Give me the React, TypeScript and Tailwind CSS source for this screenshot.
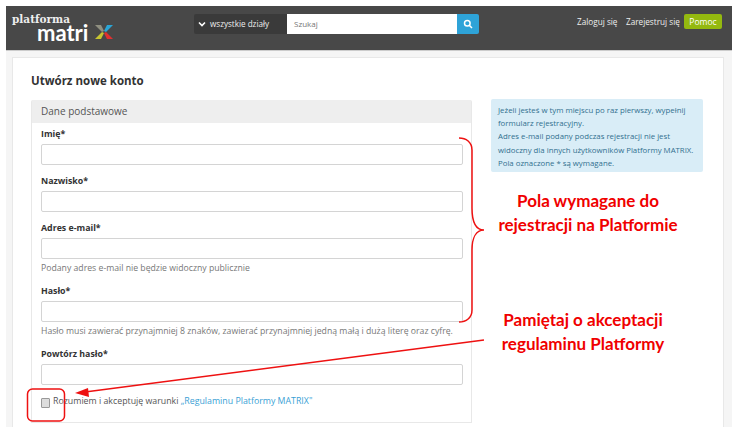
const font = { fontFamily: '"Open Sans", sans-serif' };

const Field = ({ label, hint }: { label: string; hint?: string }) => (
  <div className="mb-[9px]">
    <label className="block h-[15px] text-[8.8px] leading-[15px] font-bold text-[#333]">{label}</label>
    <div className="mt-[2px] h-[21px] rounded-[2px] border border-[#d4d4d4] bg-white" />
    {hint && <p className="mt-[3px] h-[13px] whitespace-nowrap text-[8.7px] leading-[13px] text-[#777]">{hint}</p>}
  </div>
);

const Annotations = () => (
  <>
    <svg className="absolute left-0 top-0 pointer-events-none" width="738" height="448" fill="none">
      {/* klamra */}
      <path
        d="M459 138 C466 138 472 142 472 150 L472 208 C472 222 476 230 484 230 C476 230 472 238 472 250 L472 310 C472 318 466 322 459 322"
        stroke="#ee1111"
        strokeWidth="1.5"
      />
      {/* strzalka */}
      <path d="M484 340 L85 392" stroke="#ee1111" strokeWidth="1.5" />
      <path d="M75 393 L88 388 L89 397 Z" fill="#ee1111" />
      <rect x="27.5" y="389" width="37" height="32" rx="5" stroke="#ee1111" strokeWidth="1.5" />
    </svg>
    <div className="absolute left-[488px] top-[189px] w-[200px] text-center text-[17px] leading-[24px] font-bold text-[#f00000] [font-family:Lato,sans-serif]">
      <p>Pola wymagane do</p>
      <p>rejestracji na Platformie</p>
    </div>
    <div className="absolute left-[483px] top-[308px] w-[200px] text-center text-[17px] leading-[24px] font-bold text-[#f00000] [font-family:Lato,sans-serif]">
      <p>Pamiętaj o akceptacji</p>
      <p>regulaminu Platformy</p>
    </div>
  </>
);

const App = () => {
  return (
    <div className="relative h-[448px] w-[738px] overflow-hidden bg-white px-[6px] pt-[6px]" style={font}>
      <div className="flex h-[44px] items-start bg-[#484848] pt-[8px]">
        <div className="relative ml-[6px] h-[30px] w-[110px] shrink-0">
          <span className="absolute left-0 top-[-2px] text-[10.5px] leading-[14px] font-bold text-[#eee] [font-family:'DejaVu_Serif',serif]">platforma</span>
          <span className="absolute left-[25px] top-[12px] text-[22px] leading-[14px] font-bold text-white [font-family:Lato,sans-serif]">matri</span>
          <svg className="absolute left-[83px] top-[11px]" width="18" height="14" viewBox="0 0 18 14">
            <path d="M0 0 L6 0 L9 6 L7 7 Z" fill="#8f8f80" />
            <path d="M18 0 L12 0 L9 6 L11 7 Z" fill="#2aa5d6" />
            <path d="M0 14 L6 14 L9 8 L7 7 Z" fill="#c6c430" />
            <path d="M18 14 L12 14 L9 8 L11 7 Z" fill="#e03030" />
          </svg>
        </div>
        <div className="ml-[72px] flex h-[20px] w-[93px] items-center whitespace-nowrap rounded-l-[2px] bg-[#3a3a3a] pl-[4px] text-[8.1px] text-[#eee]">
          <svg width="8" height="8" viewBox="0 0 8 8" fill="none" className="mr-[4px]">
            <path d="M1 2.5 L4 5.5 L7 2.5" stroke="#fff" strokeWidth="1.6" />
          </svg>
          wszystkie działy
        </div>
        <div className="flex h-[20px] w-[170px] items-center bg-white pl-[7px] text-[8px] text-[#777]">Szukaj</div>
        <button className="flex h-[20px] w-[22px] items-center justify-center rounded-r-[2px] bg-[#2ea3d8]">
          <svg width="10" height="10" viewBox="0 0 10 10" fill="none" stroke="#fff" strokeWidth="1.5">
            <circle cx="4.3" cy="4.3" r="2.8" />
            <path d="M6.5 6.5 L9 9" />
          </svg>
        </button>
        <div className="ml-[98px] flex items-center whitespace-nowrap text-[8.2px] leading-[15px] text-[#eee]">
          <span className="w-[49px]">Zaloguj się</span>
          <span className="w-[58px]">Zarejestruj się</span>
          <span className="flex h-[15px] w-[38px] items-center justify-center rounded-[2px] bg-[#94b90f] text-[8.5px] text-white">Pomoc</span>
        </div>
      </div>
      <div className="h-[377px] border-t border-[#ccc] bg-[#f5f5f5] pl-[6px] pr-[8px] pt-[6px]">
        <div className="h-[370px] border-x border-t border-[#e8e8e8] bg-white pl-[18px] pt-[14px]">
          <h1 className="h-[28px] text-[11.5px] leading-[18px] font-bold text-[#333]">Utwórz nowe konto</h1>
          <div className="flex items-start">
            <div className="h-[323px] w-[441px] rounded-t-[2px] border-x border-b border-[#e8e8e8]">
              <div className="h-[23px] bg-[#eee] pl-[9px] text-[10px] leading-[23px] text-[#555]">Dane podstawowe</div>
              <div className="pl-[9px] pr-[8px] pt-[4px]">
                <Field label="Imię*" />
                <Field label="Nazwisko*" />
                <Field label="Adres e-mail*" hint="Podany adres e-mail nie będzie widoczny publicznie" />
                <Field label="Hasło*" hint="Hasło musi zawierać przynajmniej 8 znaków, zawierać przynajmniej jedną małą i dużą literę oraz cyfrę." />
                <Field label="Powtórz hasło*" />
                <div className="flex items-start">
                  <span className="mt-[4px] h-[10px] w-[9px] rounded-[1px] border border-[#999] bg-[#ddd]" />
                  <span className="ml-[3px] whitespace-nowrap text-[8.8px] leading-[14px] text-[#555]">
                    Rozumiem i akceptuję warunki <a className="text-[#3a9fd5]">„Regulaminu Platformy MATRIX"</a>
                  </span>
                </div>
              </div>
            </div>
            <div className="ml-[19px] mt-[-1px] h-[73px] w-[212px] whitespace-nowrap rounded-[2px] bg-[#d9edf7] pl-[7px] pt-[5px] text-[7.8px] leading-[13.2px] text-[#31708f]">
              Jeżeli jesteś w tym miejscu po raz pierwszy, wypełnij
              <br />
              formularz rejestracyjny.
              <br />
              Adres e-mail podany podczas rejestracji nie jest
              <br />
              widoczny dla innych użytkowników Platformy MATRIX.
              <br />
              Pola oznaczone * są wymagane.
            </div>
          </div>
        </div>
      </div>
      <Annotations />
    </div>
  );
};

export default App;
